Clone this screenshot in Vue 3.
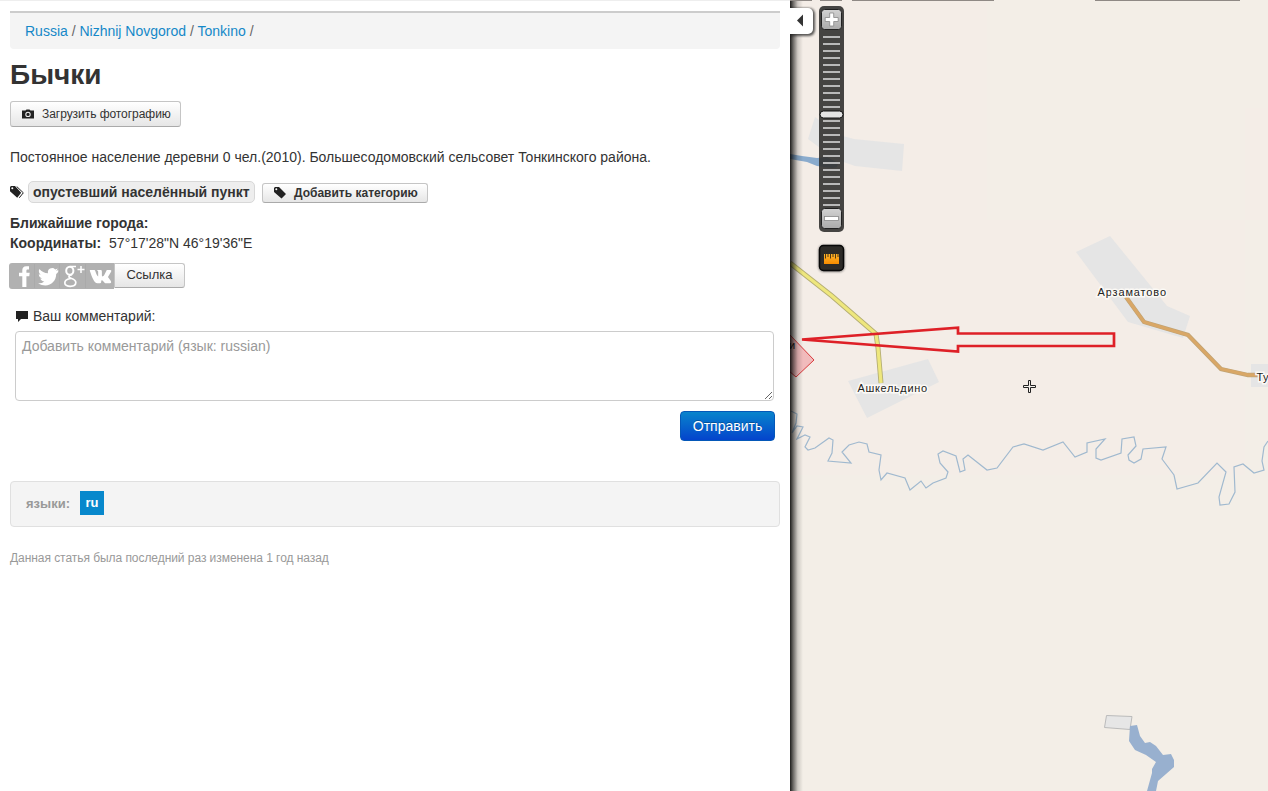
<script setup>
const crumbs = ['Russia', 'Nizhnij Novgorod', 'Tonkino']
const ticks = Array.from({ length: 25 }, (_, i) => 37 + i * 7)
const rulerMarks = [0, 1, 2, 3, 4, 5]
const river = [
  '791,411 797,414 796,423 792,433 797,426 803,427 797,439 805,435 810,437 805,447 808,450 815,448 829,438 833,440',
  '832,453 828,461 851,463 842,452 849,445 859,442 867,444 869,452 881,455 879,470 881,480 887,473 905,478 910,490',
  '921,481 926,488 933,483 946,478 948,472 940,463 938,454 943,451 956,456 960,472 965,470 963,459 968,455 987,470',
  '997,468 1013,447 1024,444 1043,450 1063,442 1075,457 1087,452 1087,443 1105,439 1096,449 1096,458 1101,460',
  '1121,453 1122,439 1134,437 1136,446 1128,455 1129,460 1134,463 1141,459 1143,449 1166,447 1162,459 1174,475',
  '1177,489 1198,483 1217,463 1226,472 1219,497 1220,505 1229,504 1235,492 1234,467 1243,464 1254,473 1264,470',
  '1262,461 1264,447 1268,441',
].join(' ')
</script>

<template>
  <div class="page">
    <main class="panel">
      <nav class="crumbs">
        <template v-for="c in crumbs" :key="c"><a>{{ c }}</a> / </template>
      </nav>
      <h1>Бычки</h1>
      <button class="btn upload">
        <svg width="12" height="10" viewBox="0 0 12 10">
          <path fill="#222" fill-rule="evenodd" d="M0 1.500h3.500L4.500.5h3l1 1H12V9.500H0zM6 2.700a2.700 2.700 0 1 0 0 5.400 2.700 2.700 0 0 0 0-5.400zm0 1a1.700 1.700 0 1 1 0 3.400 1.700 1.700 0 0 1 0-3.400z" />
          <path d="M5.500 5.500l1-1" stroke="#222" />
        </svg>
        <span>Загрузить фотографию</span>
      </button>
      <p class="about">Постоянное население деревни 0 чел.(2010). Большесодомовский сельсовет Тонкинского района.</p>
      <div class="cats">
        <svg class="tags" width="14" height="13" viewBox="0 0 14 13">
          <path fill="#222" fill-rule="evenodd" d="M0 1l1-1h4l6.200 6.700-4 5L0 5.300zM2.300 1.300a1 1 0 1 0 0 2 1 1 0 0 0 0-2z" />
          <path fill="none" stroke="#222" d="M6.700.5l6.600 6.300-4 5" />
        </svg>
        <b class="category">опустевший населённый пункт</b>
        <button class="btn add">
          <svg width="12" height="12" viewBox="0 0 12 12">
            <path fill="#222" fill-rule="evenodd" d="M0 1l1-1h4l7 7-4.500 4.500L0 5zM2.300 1.300a1 1 0 1 0 0 2 1 1 0 0 0 0-2z" />
          </svg>
          <b>Добавить категорию</b>
        </button>
      </div>
      <div class="facts">
        <div><b>Ближайшие города:</b></div>
        <div><b>Координаты:</b><span class="coords">57°17'28"N 46°19'36"E</span></div>
      </div>
      <div class="share">
        <svg width="105" height="26" viewBox="0 0 105 26">
          <path fill="#b1b1b1" d="M3 0h102v26H3a3 3 0 0 1-3-3V3a3 3 0 0 1 3-3z" />
          <path d="M25.500 1v24M50.500 1v24M76.500 1v24" stroke="#aaa" />
          <g fill="#fff">
            <path d="M20 3.200h-2.600c-3 0-4.100 1.700-4.100 4.200v2.300H10v3.600h3.300V24h4.100V13.300h2.900l.4-3.600h-3.300V7.900c0-1 .4-1.300 1.300-1.300H20z" />
            <path d="M49.200 7.100c-.7.300-1.400.5-2.200.6.800-.5 1.400-1.200 1.700-2.100-.8.400-1.600.7-2.500.9a4.200 4.200 0 0 0-7.200 3.800c-3.400-.2-6.500-1.800-8.600-4.400-1.100 2-.6 4.400 1.300 5.800-.7 0-1.300-.2-1.900-.5 0 2 1.400 3.700 3.400 4.200-.6.100-1.200.2-1.900.1.600 1.700 2.100 2.900 4 2.900a8.400 8.400 0 0 1-6.200 1.800c9.500 5.800 18.200-.8 18.100-9.300.8-.6 1.500-1.300 2-2.100z" />
            <path d="M84.500 19.500h3.200c1 0 1.300-.6 1.300-1.700 0-1.500.9-2 2.200-.7 1.500 1.500 2 2.400 3.800 2.400h4.200c2 0 1.900-1.500.8-2.800l-3-3.500 3.500-5c.8-1.200.5-2-.7-2h-4.200l-3 5.100c-1.900 2.200-2.800 1.700-2.800-.3V8c0-1.400-.5-1.800-1.700-1.800H84l1.400 1.600v4.800c-1.600-.8-2.900-4.300-3.400-5.500-.3-.7-.7-.9-1.500-.9h-4c-1 0-1.100.4-.8 1.200 2.200 5.600 5 11.900 8.800 12.100z" transform="translate(17 .8) scale(.845 1)" />
          </g>
          <g fill="none" stroke="#fff">
            <ellipse cx="60.800" cy="7.800" rx="3.600" ry="4" stroke-width="2" />
            <path d="M61 3.500h6M63 11.500c-4 1.500-4 2.800-1 3.800 3 1 4.800 2 4.800 4.300 0 5-11 5-11 .3 0-2.500 2-4 6.200-4.400" stroke-width="1.700" />
            <path d="M68.500 6.500h7M72 3v7" stroke-width="1.500" />
          </g>
        </svg>
        <button class="btn link">Ссылка</button>
      </div>
      <label class="say">
        <svg width="12" height="11" viewBox="0 0 12 11"><path fill="#222" d="M0 0h12v8H5l-3 3V8H0z" /></svg>
        <span>Ваш комментарий:</span>
      </label>
      <textarea placeholder="Добавить комментарий (язык: russian)"></textarea>
      <button class="send">Отправить</button>
      <div class="langs"><b class="caption">языки:</b><b class="lang">ru</b></div>
      <p class="changed">Данная статья была последний раз изменена 1 год назад</p>
    </main>

    <aside class="map">
      <svg width="478" height="791" viewBox="790 0 478 791">
        <defs>
          <linearGradient id="edge">
            <stop offset="0" stop-color="#000" stop-opacity=".88" />
            <stop offset=".25" stop-color="#000" stop-opacity=".55" />
            <stop offset=".6" stop-color="#000" stop-opacity=".15" />
            <stop offset="1" stop-color="#000" stop-opacity="0" />
          </linearGradient>
          <linearGradient id="knob" x2="0" y2="1">
            <stop stop-color="#d2d2d2" />
            <stop offset="1" stop-color="#aaa" />
          </linearGradient>
          <linearGradient id="orange" x2="0" y2="1">
            <stop stop-color="#ffb42c" />
            <stop offset="1" stop-color="#f78c00" />
          </linearGradient>
          <filter id="soft" x="-30%" y="-30%" width="160%" height="160%"><feGaussianBlur stdDeviation="1.300" /></filter>
        </defs>
        <path fill="#f3eee7" d="M790 0h478v791H790z" />
        <path fill="#f4ede7" d="M790 0h197v220h-197zM790 220h455v255H790zM1245 108h23v112h-23z" />

        <g fill="#e5e5e5">
          <path d="M815 117l24 18 15 4 50 5-2 27-47-5-20-7-27-20z" />
          <path d="M848 381l80-22 11 23-72 36z" />
          <path d="M1076 252l34-16 57 70 23 10-7 22-55-16z" />
          <path d="M1251 364h17v23h-17z" />
        </g>
        <path fill="#8aabcd" d="M790 154l12 2 15 2 10-1 11 6-1 4-5 1-15-2-10-4-17-3z" />
        <path fill="#e6e6e6" stroke="#bbb" d="M1106.500 715.500l25.500 1-2 13-25.500-2z" />
        <path fill="#98b0cf" d="M1130 726l7-1 3 11 5 7 5-1 6 4 7 9 8-1 3 6v7l-16 14-2 10h-9l5-18v-4l4-7-10-7-11-5-6-9z" />

        <polyline :points="river" fill="none" stroke="#a0b9cf" stroke-width="1.200" />

        <path fill="none" stroke="#b5ae74" stroke-width="5" d="M790 263l42 33 44 38 2 14 3 35" />
        <path fill="none" stroke="#eee77d" stroke-width="3.200" d="M790 263l42 33 44 38 2 14 3 35" />
        <path fill="none" stroke="#c0a374" stroke-width="4.300" d="M1126 297l18 25 44 13 33 34 27 6h11" />
        <path fill="none" stroke="#d9a766" stroke-width="3" d="M1126 297l18 25 44 13 33 34 27 6h11" />

        <path fill="#ee9aa0" fill-opacity=".6" stroke="#d93a3c" d="M789 334l25 26-18 17-7-6z" />
        <g class="labels">
          <text x="857.500" y="391.500" textLength="70">Ашкельдино</text>
          <text x="1097.500" y="296" textLength="69">Арзаматово</text>
          <text x="1256.500" y="381">Ту</text>
          <text class="bare" x="789" y="349">и</text>
        </g>
        <path fill="url(#edge)" d="M790 0h13v791h-13z" />

        <path fill="none" stroke="#de2027" stroke-width="2.700" d="M802 339.500l156-11.800V333.500h156v12.500H958v5.500z" />
        <path fill="#f5f2ed" stroke="#222" d="M1028.500 380.500h2v5h5v2h-5v5h-2v-5h-5v-2h5z" />

        <path stroke="#8f8985" stroke-width="1.500" d="M790 .3h22M820 .3h22M852 .3h142M1095 .3h145" />

        <path fill="#222" opacity=".75" filter="url(#soft)" d="M787 8h22a6 6 0 0 1 6 6v16a6 6 0 0 1-6 6h-22z" />
        <path fill="#fff" d="M790 8h18a5 5 0 0 1 5 5v16a5 5 0 0 1-5 5h-18z" />
        <path fill="#333" d="M797 20.500l6-6v12z" />

        <rect x="819" y="6" width="25" height="226" rx="5" fill="#343331" fill-opacity=".91" />
        <path v-for="y in ticks" :key="y" stroke="#b9b9b9" stroke-width="2" :d="`M823 ${y}h17`" />
        <rect x="821.500" y="9.500" width="20" height="20" rx="3" fill="url(#knob)" stroke="#222" />
        <path fill="#fff" stroke="#888" stroke-width=".8" d="M829.700 13h4v4.500h4.500v4h-4.500V26h-4v-4.500h-4.500v-4h4.500z" />
        <rect x="821.500" y="208.500" width="20" height="20" rx="3" fill="url(#knob)" stroke="#222" />
        <rect x="824.500" y="216.500" width="14" height="4" fill="#fff" stroke="#888" stroke-width=".8" />
        <rect x="820" y="111" width="23" height="7" rx="3.500" fill="#e4e4e4" stroke="#111" />

        <rect x="818.500" y="245" width="26" height="27" rx="5" fill="#333" opacity=".6" filter="url(#soft)" />
        <rect x="819.500" y="245.500" width="24" height="25" rx="4" fill="#2d2b28" stroke="#080808" stroke-width="1.500" />
        <rect x="824" y="254" width="15" height="10" fill="url(#orange)" />
        <path v-for="m in rulerMarks" :key="m" stroke="#3b2b12" stroke-width=".9" :d="`M${825.500 + m * 2.500} 254v${m % 2 ? 3 : 4.500}`" />
      </svg>
    </aside>
  </div>
</template>

<style>
body { background: #fff; overflow: hidden; }
</style>

<style scoped>
.page { display: flex; width: 1268px; height: 791px; overflow: hidden; font: 14px/20px "Liberation Sans", Arial, sans-serif; color: #333; }
.panel { box-sizing: border-box; width: 790px; padding: 10px 10px 0; border-top: 1px solid #eee; display: flex; flex-direction: column; align-items: flex-start; background: #fff; }
.map { width: 478px; height: 791px; }
.map svg { display: block; }
button { font-family: inherit; margin: 0; color: #333; }
.crumbs { box-sizing: border-box; width: 770px; height: 38px; padding: 8px 15px; border-top: 2px solid #ccc; border-radius: 0 0 4px 4px; background: #f4f4f4; color: #666; white-space: pre-wrap; }
.crumbs a { color: #1488c8; }
h1 { margin: 6px 0 0; font-size: 28px; line-height: 40px; height: 46px; }
.btn { box-sizing: border-box; display: flex; align-items: center; white-space: nowrap; border: 1px solid #c5c5c5; border-bottom-color: #aaa; border-radius: 3px; background: linear-gradient(#fff, #e6e6e6); }
.upload { width: 171px; height: 26px; padding: 0 0 0 11px; gap: 8px; font-size: 12px; letter-spacing: -.05px; }
.about { margin: 20px 0 0; height: 20px; }
.cats { display: flex; margin-top: 14px; height: 22px; }
.tags { margin-top: 5px; }
.category { box-sizing: border-box; width: 227px; height: 22px; margin-left: 4px; padding-left: 4px; border: 1px solid #d8d8d8; border-radius: 5px; background: #eee; white-space: nowrap; }
.add { width: 166px; height: 20px; margin: 2px 0 0 7px; padding: 0 0 0 11px; gap: 8px; font-size: 12px; }
.facts { margin-top: 10px; height: 50px; }
.coords { margin-left: 8px; }
.share { display: flex; height: 26px; margin-left: -1px; }
.link { width: 71px; height: 25px; justify-content: center; padding: 0 0 3px; font-size: 13px; border-radius: 0 3px 3px 0; }
.say { display: flex; align-items: center; gap: 5px; margin: 17px 0 0 6px; height: 20px; }
textarea { box-sizing: border-box; width: 759px; height: 70px; margin: 5px 0 0 5px; padding: 4px 6px; border: 1px solid #ccc; border-radius: 4px; font: inherit; background: #fff; }
textarea::placeholder { color: #999; }
.send { width: 95px; height: 30px; margin: 10px 5px 0 0; align-self: flex-end; padding: 0; border: 1px solid #0458b8; border-radius: 4px; color: #fff; font-size: 14px; background: linear-gradient(#0884cc, #0444cc); text-shadow: 0 -1px 0 rgba(0, 0, 0, .25); }
.langs { box-sizing: border-box; display: flex; align-items: center; width: 770px; height: 46px; margin-top: 40px; padding: 0 15px 2px; border: 1px solid #e0e0e0; border-radius: 4px; background: #f4f4f4; }
.caption { padding-top: 2px; color: #999; font-size: 13px; }
.lang { width: 24px; height: 24px; margin-left: 10px; background: #0888cc; color: #fff; font-size: 13px; line-height: 24px; text-align: center; }
.changed { margin: 21px 0 0; color: #999; font-size: 12px; letter-spacing: -.055px; }
.labels text { font: 11px "Liberation Sans", Arial, sans-serif; fill: #222; stroke: #fbf9f5; stroke-width: 3px; paint-order: stroke; letter-spacing: .5px; }
.labels .bare { stroke: none; }
</style>
